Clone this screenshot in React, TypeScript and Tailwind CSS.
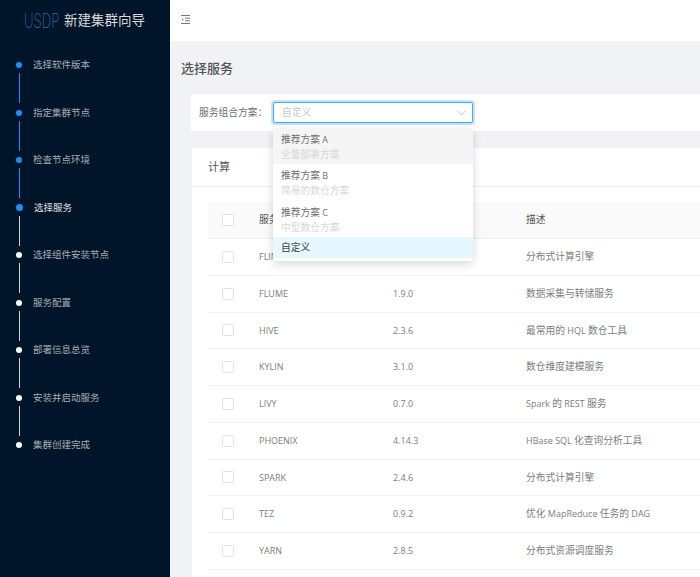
const STEPS = [
  { label: "选择软件版本", state: "done" },
  { label: "指定集群节点", state: "done" },
  { label: "检查节点环境", state: "done" },
  { label: "选择服务", state: "active" },
  { label: "选择组件安装节点", state: "todo" },
  { label: "服务配置", state: "todo" },
  { label: "部署信息总览", state: "todo" },
  { label: "安装并启动服务", state: "todo" },
  { label: "集群创建完成", state: "todo" }
];

const SERVICES = [
  { name: "FLINK", version: "1.10.0", desc: "分布式计算引擎" },
  { name: "FLUME", version: "1.9.0", desc: "数据采集与转储服务" },
  { name: "HIVE", version: "2.3.6", desc: "最常用的 HQL 数仓工具" },
  { name: "KYLIN", version: "3.1.0", desc: "数仓维度建模服务" },
  { name: "LIVY", version: "0.7.0", desc: "Spark 的 REST 服务" },
  { name: "PHOENIX", version: "4.14.3", desc: "HBase SQL 化查询分析工具" },
  { name: "SPARK", version: "2.4.6", desc: "分布式计算引擎" },
  { name: "TEZ", version: "0.9.2", desc: "优化 MapReduce 任务的 DAG" },
  { name: "YARN", version: "2.8.5", desc: "分布式资源调度服务" }
];

const PLANS = [
  { title: "推荐方案 A", sub: "全量部署方案", bg: "bg-[#f5f5f5]" },
  { title: "推荐方案 B", sub: "简易的数仓方案", bg: "bg-white" },
  { title: "推荐方案 C", sub: "中型数仓方案", bg: "bg-white" }
];

// latin runs sit a little smaller than the CJK ones in the reference
function Mixed({ text }: { text: string }) {
  return (
    <>
      {text.split(/([A-Za-z0-9. ]+)/).map((part, i) =>
        /[A-Za-z0-9]/.test(part) ? (
          <span key={i} className="text-[9px]">{part}</span>
        ) : (
          <span key={i}>{part}</span>
        )
      )}
    </>
  );
}

function Checkbox() {
  return <span className="block h-[12px] w-[12px] rounded-[2px] border border-[#e2e2e2] bg-white" />;
}

function Sidebar() {
  return (
    <aside className="flex h-[577px] w-[170px] shrink-0 flex-col bg-[#001529]">
      <div className="flex h-[41px] items-center pl-[24px]">
        <span className="block w-[33px] origin-left scale-x-[0.66] font-['Inter'] text-[20px] font-extralight whitespace-nowrap text-[#2a6aa8]">USDP</span>
        <span className="ml-[7px] text-[13.5px] whitespace-nowrap text-[#d9d9d9]">新建集群向导</span>
      </div>
      <div className="mt-[17px] flex flex-col">
        {STEPS.map((step, i) => (
          <div key={step.label} className="flex h-[47.5px] items-start">
            <div className="flex w-[38px] shrink-0 flex-col items-center">
              <div className="flex h-[14px] items-center">
                <span
                  className={
                    step.state === "active"
                      ? "h-[7px] w-[7px] rounded-full bg-[#1890ff]"
                      : step.state === "done"
                        ? "h-[6px] w-[6px] rounded-full bg-[#1890ff]"
                        : "h-[6px] w-[6px] rounded-full bg-white"
                  }
                />
              </div>
              {i < STEPS.length - 1 && (
                <span className={"mt-[1px] block h-[30px] w-[1px] " + (step.state === "done" ? "bg-[#1890ff]" : "bg-[#d0d3d6]")} />
              )}
            </div>
            <span
              className={
                "text-[9.5px] leading-[14px] whitespace-nowrap " +
                (step.state === "active" ? "-ml-[4px] text-[#e0e0e0]" : "-ml-[5px] text-[#a6adb4]")
              }
            >
              {step.label}
            </span>
          </div>
        ))}
      </div>
    </aside>
  );
}

function TopBar() {
  return (
    <div className="flex h-[41px] items-start bg-white pl-[11px] pt-[15px]">
      <svg width="9" height="9" viewBox="0 0 9 9" fill="none" stroke="#777" strokeWidth="1">
        <path d="M0 0.5H9M4 3.2H9M4 5.8H9M0 8.5H9" />
        <path d="M2.2 3L0.6 4.5L2.2 6" fill="#777" stroke="none" />
      </svg>
    </div>
  );
}

function PlanDropdown() {
  return (
    <div className="absolute left-[103px] top-[128px] w-[200px] overflow-hidden rounded-[2px] bg-white pb-[3px] shadow-[0_3px_10px_rgba(0,0,0,0.16)]">
      {PLANS.map((plan) => (
        <div key={plan.title} className={"h-[36.3px] pl-[8px] pt-[4px] " + plan.bg}>
          <div className="text-[9.75px] leading-[15px] text-[#707070]"><Mixed text={plan.title} /></div>
          <div className="text-[9.75px] leading-[15px] text-[#d8d8d8]">{plan.sub}</div>
        </div>
      ))}
      <div className="flex h-[21px] items-center bg-[#e6f7ff] pl-[8px] pt-[1px] text-[9.75px] font-medium text-[#595959]">自定义</div>
    </div>
  );
}

function ServiceTable() {
  return (
    <div className="ml-[22px] mt-[17px] flex flex-col bg-white pb-[30px]">
      <div className="flex h-[39px] items-center border-b border-[#f0f0f0] pl-[16px] pt-[1px] text-[11px] text-[#555]">计算</div>
      <div className="pl-[16px] pt-[15px]">
        <div className="flex h-[37px] items-center border-b border-[#f0f0f0] bg-[#fafafa] text-[9.75px] text-[#555]">
          <div className="w-[51px] pl-[14px]"><Checkbox /></div>
          <div className="w-[134px] pt-[1px]">服务名称</div>
          <div className="w-[133px] pt-[1px]">版本</div>
          <div className="pt-[1px]">描述</div>
        </div>
        {SERVICES.map((s) => (
          <div key={s.name} className="flex h-[36.75px] items-center border-b border-[#f0f0f0] text-[9.75px] text-[#7d7d7d]">
            <div className="w-[51px] pl-[14px]"><Checkbox /></div>
            <div className="w-[134px] pt-[1px]"><Mixed text={s.name} /></div>
            <div className="w-[133px] pt-[1px]"><Mixed text={s.version} /></div>
            <div className="pt-[1px]"><Mixed text={s.desc} /></div>
          </div>
        ))}
      </div>
    </div>
  );
}

export default function App() {
  return (
    <div className="flex h-[577px] w-[700px] overflow-hidden bg-[#f0f2f5] font-['Open_Sans','Noto_Sans_CJK_SC',sans-serif]">
      <Sidebar />
      <div className="relative min-w-0 flex-1">
        <TopBar />
        <h1 className="pl-[11px] pt-[18px] text-[13px] leading-[18px] font-medium text-[#555]">选择服务</h1>
        <div className="ml-[21px] mt-[17px] flex h-[37px] items-center bg-white pl-[8px]">
          <span className="w-[74px] pt-[1px] text-[9.75px] whitespace-nowrap text-[#707070]">服务组合方案：</span>
          <div className="flex h-[21px] w-[200px] items-center justify-between rounded-[2px] border border-[#40a9ff] pl-[8px] pr-[6px] shadow-[0_0_0_2px_rgba(24,144,255,0.25)]">
            <span className="pt-[2px] text-[9.75px] text-[#c8c8c8]">自定义</span>
            <svg width="9" height="6" viewBox="0 0 9 6" fill="none" stroke="#bfbfbf" strokeWidth="0.9">
              <path d="M0.5 0.8L4.5 5L8.5 0.8" />
            </svg>
          </div>
        </div>
        <ServiceTable />
        <PlanDropdown />
      </div>
    </div>
  );
}
